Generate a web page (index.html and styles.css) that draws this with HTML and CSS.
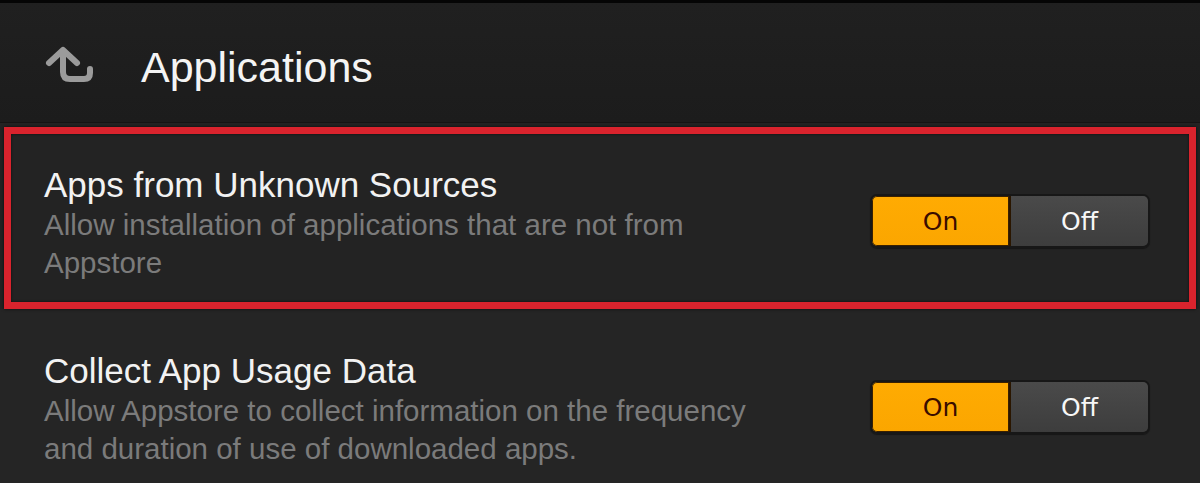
FILE: index.html
```html
<!DOCTYPE html>
<html>
<head>
<meta charset="utf-8">
<link rel="stylesheet" href="styles.css">
</head>
<body>
<div class="screen">
  <div class="topline"></div>
  <header class="header">
    <svg class="back" width="50" height="40" viewBox="45 46 50 40" aria-hidden="true">
      <path d="M49 63 L63 50 L77 63" fill="none" stroke="#9b9b9b" stroke-width="6" stroke-linecap="round" stroke-linejoin="round"/>
      <path d="M63 52 V72 Q63 79 70 79 H84 Q90 79 90 73 V69" fill="none" stroke="#9b9b9b" stroke-width="6" stroke-linecap="round" stroke-linejoin="round"/>
    </svg>
    <h1 class="title">Applications</h1>
  </header>
  <section class="row row-highlight">
    <div class="text">
      <div class="row-title">Apps from Unknown Sources</div>
      <div class="row-sub">Allow installation of applications that are not from Appstore</div>
    </div>
    <div class="toggle">
      <span class="opt on">On</span>
      <span class="opt off">Off</span>
    </div>
  </section>
  <section class="row">
    <div class="text">
      <div class="row-title">Collect App Usage Data</div>
      <div class="row-sub">Allow Appstore to collect information on the frequency and duration of use of downloaded apps.</div>
    </div>
    <div class="toggle">
      <span class="opt on">On</span>
      <span class="opt off">Off</span>
    </div>
  </section>
</div>
</body>
</html>
```
FILE: styles.css
```css
html, body {
  margin: 0;
  padding: 0;
  background: #252525;
}
body {
  font-family: "Liberation Sans", Arial, sans-serif;
  overflow: hidden;
}
.screen {
  width: 1200px;
  height: 483px;
  overflow: hidden;
  background: #252525;
}
.topline {
  height: 3px;
  background: #050505;
}
.header {
  height: 119px;
  background: linear-gradient(#202020, #1c1c1c);
  border-bottom: 1px solid #141414;
  display: flex;
  align-items: flex-start;
  padding-left: 45px;
  box-sizing: content-box;
}
.back {
  margin-top: 43px;
  flex: none;
}
.title {
  margin: 39px 0 0 46px;
  font-size: 43px;
  line-height: 50px;
  font-weight: normal;
  color: #f4f4f4;
}
.row {
  position: relative;
  height: 186px;
  display: flex;
  justify-content: space-between;
  align-items: flex-start;
  padding: 0 50px 0 44px;
  box-sizing: border-box;
}
.row-highlight {
  background: #232323;
}
.row-highlight::after {
  content: "";
  position: absolute;
  left: 4px;
  right: 4px;
  top: 4px;
  bottom: 0;
  border: 7px solid #d9232d;
  box-shadow: 0 0 3px rgba(0,0,0,0.7), inset 0 0 3px rgba(0,0,0,0.6);
  pointer-events: none;
}
.text {
  width: 750px;
  padding-top: 42px;
}
.row-title {
  font-size: 35px;
  line-height: 40px;
  color: #f2f2f2;
}
.row-sub {
  margin-top: 1px;
  font-size: 29.5px;
  line-height: 38px;
  color: #7b7b7b;
}
.toggle {
  margin-top: 71px;
  display: flex;
  width: 280px;
  height: 54px;
  box-sizing: border-box;
  border: 2px solid #171717;
  border-radius: 7px;
  overflow: hidden;
  font-family: "DejaVu Sans", sans-serif;
  font-size: 25px;
  box-shadow: 0 1px 1px rgba(0,0,0,0.4);
}
.opt {
  flex: 1;
  display: flex;
  align-items: center;
  justify-content: center;
}
.on {
  background: linear-gradient(#ffab02, #fba600);
  color: #3a0c00;
  border-right: 2px solid #2a1600;
  box-shadow: inset 0 0 0 1px #3a2000;
  border-radius: 5px 0 0 5px;
}
.off {
  background: linear-gradient(#4a4a4a, #3d3d3d);
  color: #f7f7f7;
}
```
